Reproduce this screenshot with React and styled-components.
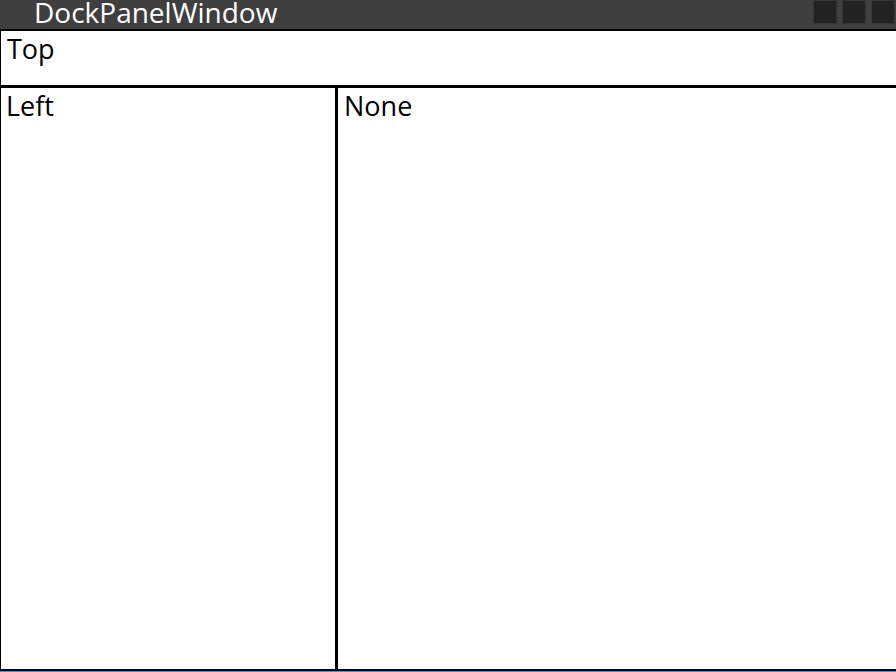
import React from "react";
import styled, { createGlobalStyle } from "styled-components";

const Global = createGlobalStyle`
  html, body { margin: 0; padding: 0; background: #ffffff; }
  body { font-family: "Open Sans", "Noto Sans", sans-serif; overflow: hidden; }
`;

const Window = styled.div`
  width: 896px;
  height: 672px;
  display: flex;
  flex-direction: column;
  background: #ffffff;
  box-sizing: border-box;
  border-bottom: 1px solid #4a90d9;
`;

const TitleBar = styled.div`
  height: 29px;
  flex: none;
  background: #3f3f3f;
  border-bottom: 2px solid #000;
  display: flex;
  align-items: flex-start;
  justify-content: space-between;
  padding-left: 34px;
`;

const Title = styled.div`
  color: #ffffff;
  font-size: 28px;
  line-height: 27px;
  margin-top: -1px;
  white-space: nowrap;
`;

const Controls = styled.div`
  display: flex;
  gap: 5px;
  padding-right: 1px;
`;

const CtrlBtn = styled.div`
  width: 22px;
  height: 22px;
  background: #222222;
  border: 1px solid #363636;
`;

const Top = styled.div`
  height: 54px;
  flex: none;
  border-left: 1px solid #000;
  border-bottom: 3px solid #000;
`;

const Body = styled.div`
  flex: 1;
  display: flex;
  min-height: 0;
  border-bottom: 2px solid #000;
`;

const Left = styled.div`
  width: 334px;
  flex: none;
  border-left: 1px solid #000;
  border-right: 3px solid #000;
`;

const Fill = styled.div`
  flex: 1;
`;

const Label = styled.div`
  color: #000;
  font-size: 27px;
  line-height: 32px;
  padding-left: ${(p) => p.$indent ?? 6}px;
  margin-top: 2px;
  white-space: nowrap;
`;

export default function App() {
  return (
    <>
      <Global />
      <Window>
        <TitleBar>
          <Title>DockPanelWindow</Title>
          <Controls>
            <CtrlBtn />
            <CtrlBtn />
            <CtrlBtn />
          </Controls>
        </TitleBar>
        <Top>
          <Label>Top</Label>
        </Top>
        <Body>
          <Left>
            <Label $indent={5}>Left</Label>
          </Left>
          <Fill>
            <Label>None</Label>
          </Fill>
        </Body>
      </Window>
    </>
  );
}
